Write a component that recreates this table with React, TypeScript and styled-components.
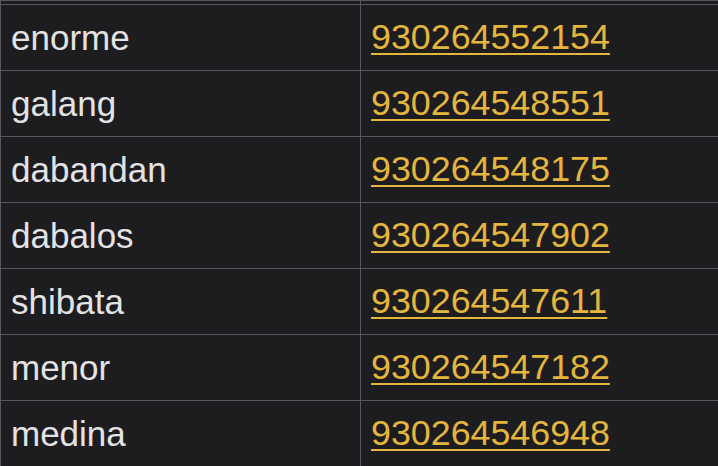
import React, { FC } from "react";
import styled, { createGlobalStyle } from "styled-components";

const GlobalStyle = createGlobalStyle`
  html, body {
    margin: 0;
    padding: 0;
    background: #1d1d20;
    overflow: hidden;
  }
`;

const Page = styled.div`
  width: 718px;
  height: 466px;
  overflow: hidden;
  background: #1d1d20;
`;

const Table = styled.table`
  border-collapse: collapse;
  width: 760px;
  table-layout: fixed;
  font-family: "Liberation Sans", Arial, sans-serif;
  font-size: 35px;
`;

const Row = styled.tr<{ $h: number }>`
  height: ${(p) => p.$h}px;
`;

const Cell = styled.td`
  border: 1px solid #56565b;
  padding: 0 0 0 10px;
  vertical-align: middle;
  white-space: nowrap;
  color: #e3e3e5;
`;

const NameCell = styled(Cell)`
  width: 349px;
`;

const Link = styled.a`
  color: #e4b63d;
  font-size: 35.8px;
  text-decoration: underline;
  text-decoration-thickness: 2px;
  text-underline-offset: 4px;
`;

type Entry = { name: string; id: string };

const entries: Entry[] = [
  { name: "enorme", id: "930264552154" },
  { name: "galang", id: "930264548551" },
  { name: "dabandan", id: "930264548175" },
  { name: "dabalos", id: "930264547902" },
  { name: "shibata", id: "930264547611" },
  { name: "menor", id: "930264547182" },
  { name: "medina", id: "930264546948" },
];

const App: FC = () => {
  return (
    <>
      <GlobalStyle />
      <Page>
        <Table>
          <tbody>
            <Row $h={4}>
              <NameCell />
              <Cell />
            </Row>
            {entries.map((e) => (
              <Row $h={66} key={e.id}>
                <NameCell>{e.name}</NameCell>
                <Cell>
                  <Link href="#">{e.id}</Link>
                </Cell>
              </Row>
            ))}
          </tbody>
        </Table>
      </Page>
    </>
  );
};

export default App;
